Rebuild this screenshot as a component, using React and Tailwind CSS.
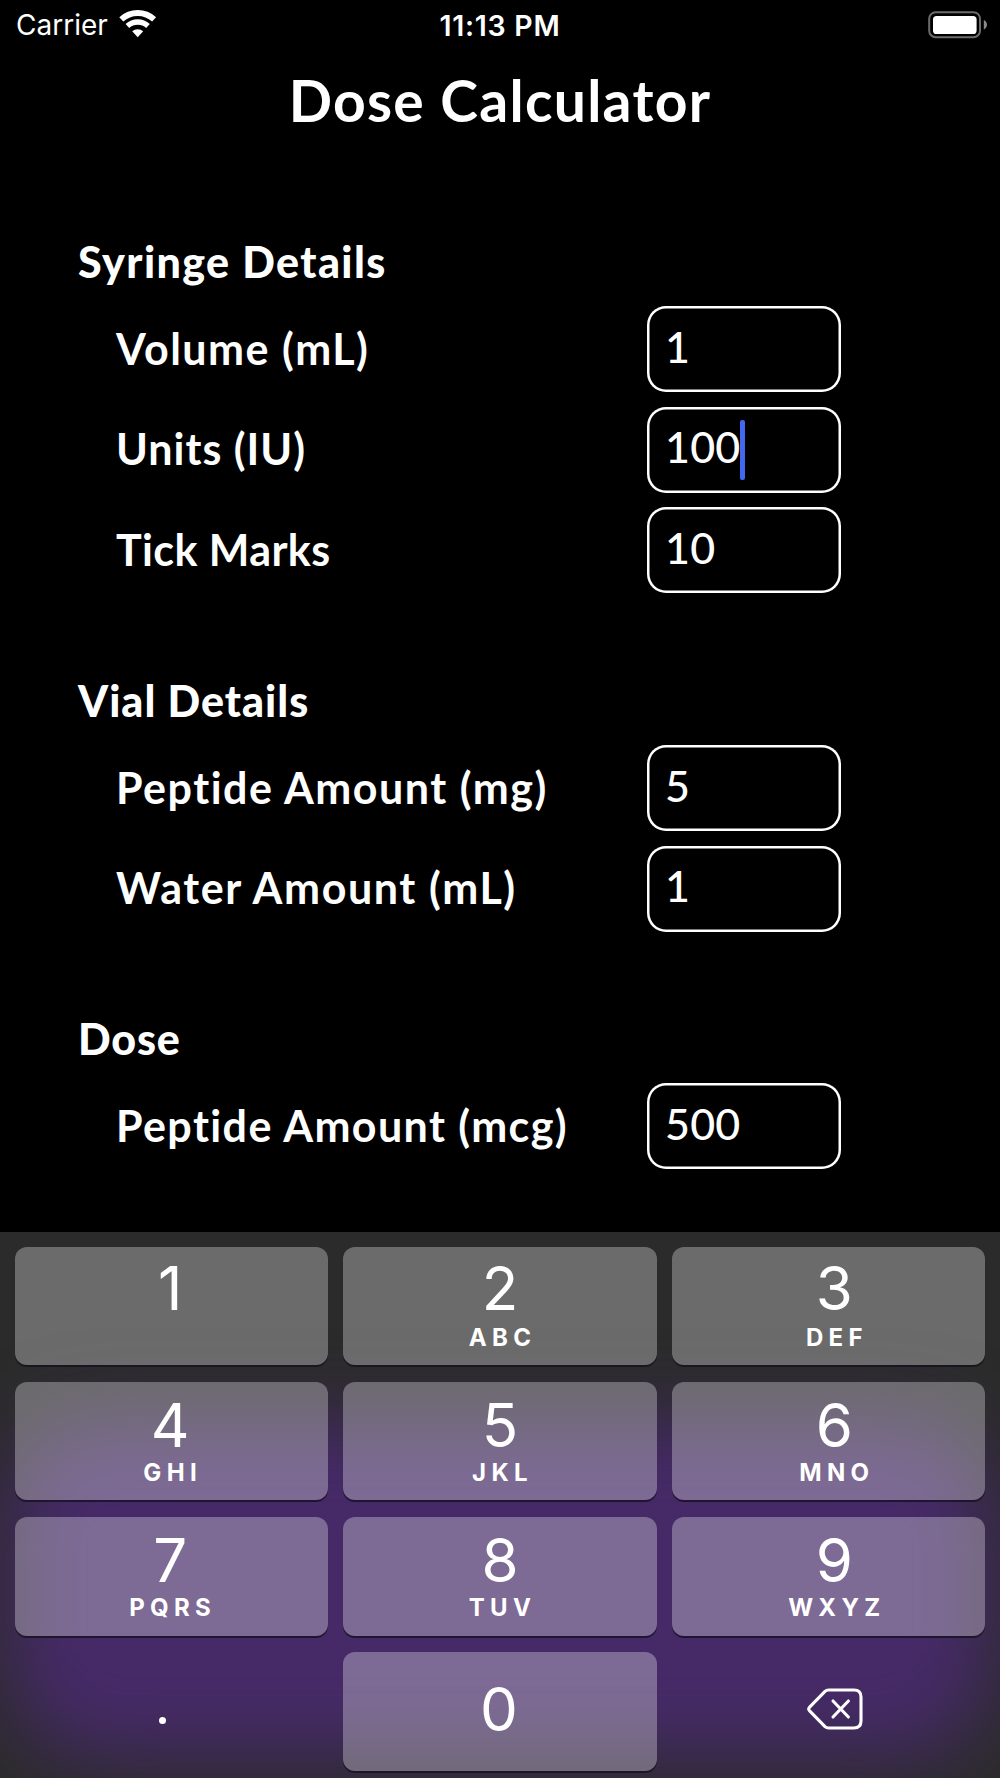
const SECTIONS = [
  {
    title: "Syringe Details",
    titleClass: "tracking-[1.4px]",
    className: "h-[364px]",
    fields: [
      { label: "Volume (mL)", value: "1", labelClass: "tracking-[1.5px]" },
      { label: "Units (IU)", value: "100", labelClass: "tracking-[1px]", focused: true },
      { label: "Tick Marks", value: "10", labelClass: "tracking-[0.4px]" },
    ],
  },
  {
    title: "Vial Details",
    titleClass: "tracking-[1px]",
    className: "h-[263px]",
    fields: [
      { label: "Peptide Amount (mg)", value: "5", labelClass: "tracking-[1.5px]" },
      { label: "Water Amount (mL)", value: "1", labelClass: "tracking-[1.6px]" },
    ],
  },
  {
    title: "Dose",
    titleClass: "tracking-[0.8px]",
    className: "h-[162px]",
    fields: [{ label: "Peptide Amount (mcg)", value: "500", labelClass: "tracking-[1.4px]" }],
  },
];

const KEYS = [
  { digit: "1", letters: "" },
  { digit: "2", letters: "ABC" },
  { digit: "3", letters: "DEF" },
  { digit: "4", letters: "GHI" },
  { digit: "5", letters: "JKL" },
  { digit: "6", letters: "MNO" },
  { digit: "7", letters: "PQRS" },
  { digit: "8", letters: "TUV" },
  { digit: "9", letters: "WXYZ" },
];

const COLUMN_SHIFT = ["pr-[3px]", "", "pl-[12px]"];
const DIGIT_OFFSET = ["pt-[10px]", "pt-[12px]", "pt-[12px]"];

function WifiIcon() {
  return (
    <svg width="38" height="28" viewBox="0 0 38 28" fill="none">
      <path d="M2.3 9.4 A24.3 24.3 0 0 1 35.1 9.4" stroke="white" strokeWidth="5.9" />
      <path d="M8.4 16 A15.2 15.2 0 0 1 29 16" stroke="white" strokeWidth="5.4" />
      <path d="M13.2 21.2 A8.4 8.4 0 0 1 24.2 21.2 L18.7 27.2 Z" fill="white" />
    </svg>
  );
}

function BatteryIcon() {
  return (
    <svg width="60" height="28" viewBox="0 0 60 28" fill="none">
      <rect x="1.2" y="1.2" width="50.8" height="25" rx="6.5" stroke="#6b6b6b" strokeWidth="2" />
      <rect x="5" y="5" width="43.6" height="18" rx="3.6" fill="white" />
      <path d="M55.8 9 C57.6 9.8 59 11.6 59 13.7 C59 15.8 57.6 17.6 55.8 18.4 Z" fill="#8a8a8a" />
    </svg>
  );
}

function BackspaceIcon() {
  return (
    <svg width="56" height="42" viewBox="0 0 56 42" fill="none" stroke="white">
      <path
        d="M21.5 2 H47 Q54 2 54 9 V33 Q54 40 47 40 H21.5 Q19.5 40 18 38.6 L2.4 22.6 Q1 21 2.4 19.4 L18 3.4 Q19.5 2 21.5 2 Z"
        strokeWidth="3.1"
        strokeLinejoin="round"
      />
      <path d="M26 13 L41.4 29 M41.4 13 L26 29" strokeWidth="3.1" strokeLinecap="round" />
    </svg>
  );
}

function StatusBar() {
  return (
    <header className="grid h-[50px] grid-cols-3 px-[16px] font-['Inter',sans-serif] text-[28px] leading-[51px]">
      <div className="flex items-start gap-[11px]">
        <span>Carrier</span>
        <span className="mt-[10px]">
          <WifiIcon />
        </span>
      </div>
      <span className="text-center text-[28.5px] font-semibold tracking-[0.7px]">11:13 PM</span>
      <div className="mt-[11px] mr-[-4px] flex items-start justify-end">
        <BatteryIcon />
      </div>
    </header>
  );
}

function Field({ label, value, labelClass, focused }) {
  return (
    <div className="flex h-[86px] items-center justify-between">
      <label className={`pl-[38px] text-[43px] font-bold whitespace-nowrap ${labelClass}`}>
        {label}
      </label>
      <div className="flex h-[86px] w-[194px] items-center rounded-[19px] pl-[18px] shadow-[inset_0_0_0_2.5px_white]">
        <span className="pb-[4px] text-[43px] font-medium tracking-[0.2px]">{value}</span>
        {focused && <span className="h-[60px] w-[5px] rounded-[2px] bg-[#4169f0]" />}
      </div>
    </div>
  );
}

function Section({ title, titleClass, className, fields }) {
  return (
    <section className={className}>
      <h2 className={`h-[75px] text-[43px] leading-[61px] font-black ${titleClass}`}>{title}</h2>
      <div className="flex flex-col gap-[14.7px]">
        {fields.map((field) => (
          <Field key={field.label} {...field} />
        ))}
      </div>
    </section>
  );
}

function Key({ digit, letters, className }) {
  return (
    <button
      type="button"
      className={`flex h-[118.7px] flex-col items-center justify-between rounded-[12px] bg-white/30 shadow-[0_2px_0_rgba(20,15,28,0.75)] ${className}`}
    >
      <span className="text-[60px] leading-[62px]">{digit}</span>
      <span className="mb-[13.4px] h-[28px] pl-[5px] text-[24px] leading-[28px] font-bold tracking-[5.3px]">
        {letters}
      </span>
    </button>
  );
}

function Keypad() {
  return (
    <div className="grid h-[546px] grid-cols-1 grid-rows-1 overflow-hidden bg-[#2b2b2b] font-['Inter',sans-serif]">
      <div className="col-start-1 row-start-1 mt-[190px] mr-[8px] mb-[20px] ml-[8px] rounded-[90px] bg-[#462a68] blur-[40px]" />
      <div className="z-10 col-start-1 row-start-1 grid grid-cols-3 content-start gap-x-[15px] gap-y-[16.6px] px-[15px] pt-[14.5px]">
        {KEYS.map((key, i) => (
          <Key
            key={key.digit}
            {...key}
            className={`${COLUMN_SHIFT[i % 3]} ${DIGIT_OFFSET[Math.floor(i / 3)]}`}
          />
        ))}
        <button type="button" className="flex h-[118.7px] items-center justify-center pt-[17px] pr-[19px]">
          <span className="size-[7px] rounded-full bg-white" />
        </button>
        <button
          type="button"
          className="flex h-[118.7px] items-center justify-center rounded-[12px] bg-white/30 pr-[2px] pb-[6px] text-[60px] leading-[62px] shadow-[0_2px_0_rgba(20,15,28,0.75)]"
        >
          0
        </button>
        <button type="button" className="flex h-[118.7px] items-center justify-center pl-[13px] pb-[5px]">
          <BackspaceIcon />
        </button>
      </div>
    </div>
  );
}

export default function App() {
  return (
    <div className="flex h-[1778px] w-[1000px] flex-col overflow-hidden bg-black font-['Lato',sans-serif] text-white">
      <StatusBar />
      <h1 className="pt-[15px] text-center text-[57px] leading-[70px] font-bold tracking-[1.3px]">
        Dose Calculator
      </h1>
      <main className="mt-[96px] flex h-[1001px] flex-col gap-[75px] pr-[159px] pl-[78px]">
        {SECTIONS.map((section) => (
          <Section key={section.title} {...section} />
        ))}
      </main>
      <Keypad />
    </div>
  );
}
